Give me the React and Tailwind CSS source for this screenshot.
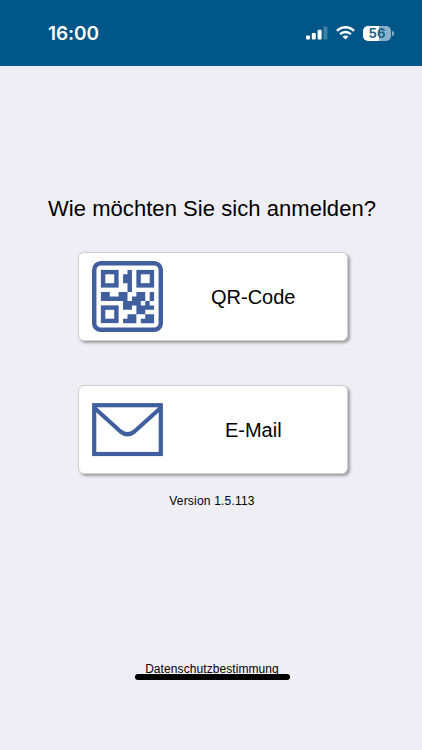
const QR_MODULES = [
  [8, 2, 1, 5], [7, 3, 1, 2],
  [2, 7, 2, 1], [6, 7, 2, 1], [10, 7, 2, 1], [13, 7, 1, 2],
  [2, 8, 6, 1], [9, 8, 3, 1],
  [7, 9, 4, 1], [12, 9, 1, 1],
  [7, 10, 2, 1], [10, 10, 4, 1],
  [10, 11, 2, 1],
  [8, 12, 2, 1], [12, 12, 2, 1],
  [7, 13, 3, 1], [11, 13, 3, 1],
];

const QR_PATH = QR_MODULES.map(([x, y, w, h]) => `M${x} ${y}h${w}v${h}h${-w}z`).join("");

function QrIcon() {
  return (
    <svg className="h-[71px] w-[71px] shrink-0" viewBox="0 0 16 16" fill="#3f5f9e">
      <rect x=".5" y=".5" width="15" height="15" rx="1.5" fill="none" stroke="#3f5f9e" />
      {[[2, 2], [10, 2], [2, 10]].map(([x, y]) => (
        <rect key={`${x}-${y}`} x={x + 0.5} y={y + 0.5} width="3" height="3" fill="none" stroke="#3f5f9e" />
      ))}
      <path d={QR_PATH} />
    </svg>
  );
}

function MailIcon() {
  return (
    <svg className="h-[54px] w-[71px] shrink-0" viewBox="0 0 71 54" fill="none" stroke="#3f5f9e" strokeWidth="4.2">
      <rect x="2.2" y="2.2" width="66.6" height="48.8" />
      <path d="M2.5 5 L28.5 28.5 Q35.5 34 42.5 28.5 L68.5 5" />
    </svg>
  );
}

function LoginButton({ icon, label, className }) {
  return (
    <button className={`flex h-[89px] w-[270px] items-center rounded-[6px] border border-[#cfcfd3] bg-white pl-[13.5px] shadow-[2px_2px_3px_rgba(0,0,0,0.35)] ${className}`}>
      {icon}
      <span className="flex-1 pl-[4px] pr-[7px] text-center text-[20px] leading-6">{label}</span>
    </button>
  );
}

function StatusBar() {
  return (
    <header className="flex h-[66px] w-full items-center bg-[#005687] pl-[48px] pr-[28px] text-white">
      <span className="mt-[2px] font-['Inter'] text-[19px] leading-6 font-semibold tracking-[-0.1px]">16:00</span>
      <div className="ml-auto flex items-center gap-[8px]">
        <svg className="h-[14px] w-[22px]" viewBox="0 0 22 14" fill="white">
          <rect x="0" y="9.5" width="4" height="4" rx="1" />
          <rect x="5.8" y="7" width="4" height="6.5" rx="1" />
          <rect x="11.6" y="3.8" width="4" height="9.7" rx="1" />
          <rect x="17.4" y="0.5" width="4" height="13" rx="1" opacity=".25" />
        </svg>
        <svg className="h-[14px] w-[19px]" viewBox="0 0 19 14" fill="none" stroke="white" strokeWidth="2.5">
          <path d="M1 4.9 C5.8 .1 13.2 .1 18 4.9" />
          <path d="M4.1 8.1 C7.2 5.2 11.8 5.2 14.9 8.1" />
          <path d="M9.5 13.6 L6.5 10.6 Q9.5 8.2 12.5 10.6Z" fill="white" stroke="none" />
        </svg>
        <div className="flex items-center gap-px">
          <div className="h-[15px] w-[28px] rounded-[5px] bg-[linear-gradient(90deg,#fff_56%,#8bb1c8_56%)] text-center font-['Inter'] text-[13px] leading-[15px] font-bold text-[#22668f]">56</div>
          <span className="h-[5px] w-[2px] rounded-r-full bg-[#8bb1c8]" />
        </div>
      </div>
    </header>
  );
}

export default function App() {
  return (
    <div className="flex h-[750px] w-[422px] flex-col items-center overflow-hidden bg-[#efeef5] font-['Liberation_Sans',Arial,sans-serif] text-black">
      <StatusBar />
      <main className="flex w-full flex-col items-center pl-[2px]">
        <h1 className="mt-[129px] text-[22px] leading-7 tracking-[0.05px] whitespace-nowrap">Wie möchten Sie sich anmelden?</h1>
        <LoginButton className="mt-[29px] ml-px" label="QR-Code" icon={<QrIcon />} />
        <LoginButton className="mt-[44px] ml-px" label="E-Mail" icon={<MailIcon />} />
        <p className="mt-[19px] text-[12px] leading-4 tracking-[0.2px]">Version 1.5.113</p>
        <a className="mt-[152px] text-[12px] leading-4 tracking-[0.08px]">Datenschutzbestimmung</a>
        <div className="-mt-[3px] h-[6px] w-[155px] rounded-full bg-black" />
      </main>
    </div>
  );
}
